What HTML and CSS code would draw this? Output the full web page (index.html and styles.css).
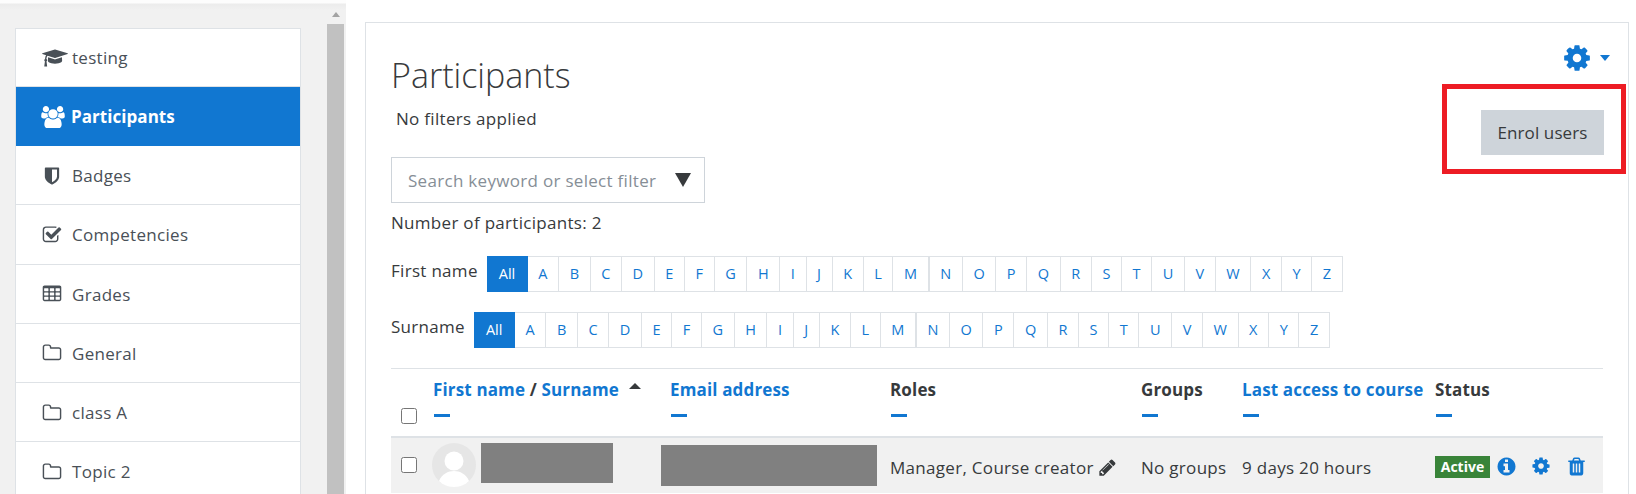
FILE: index.html
```html
<!DOCTYPE html>
<html lang="en">
<head>
<meta charset="utf-8">
<title>Participants</title>
<link rel="stylesheet" href="styles.css">
</head>
<body>
<svg class="defs" aria-hidden="true">
  <symbol id="i-cap" viewBox="0 0 2304 1792"><path d="M1774 836l18 316q4 69-82 128t-235 93.500-323 34.500-323-34.500-235-93.500-82-128l18-316 574 181q22 7 48 7t48-7zm530-324q0 23-22 31l-1120 352q-4 1-10 1t-10-1l-652-206q-43 34-71 111.500t-34 178.500q63 36 63 109 0 69-58 107l58 433q2 14-8 25-9 11-24 11h-192q-15 0-24-11-10-11-8-25l58-433q-58-38-58-107 0-73 65-111 11-207 98-330l-333-104q-22-8-22-31t22-31l1120-352q4-1 10-1t10 1l1120 352q22 8 22 31z"/></symbol>
  <symbol id="i-users" viewBox="0 0 1920 1792"><path d="M593 896q-162 5-265 128h-134q-82 0-138-40.500t-56-118.500q0-353 124-353 6 0 43.500 21t97.500 42.500 119 21.500q67 0 133-23-5 37-5 66 0 139 81 256zm1071 637q0 120-73 189.500t-194 69.500h-874q-121 0-194-69.500t-73-189.500q0-53 3.500-103.500t14-109 26.500-108.500 43-97.500 62-81 85.500-53.500 111.500-20q10 0 43 21.500t73 48 107 48 135 21.500 135-21.500 107-48 73-48 43-21.500q61 0 111.500 20t85.500 53.500 62 81 43 97.500 26.500 108.500 14 109 3.500 103.500zm-1024-1277q0 106-75 181t-181 75-181-75-75-181 75-181 181-75 181 75 75 181zm704 384q0 159-112.500 271.500t-271.500 112.500-271.500-112.500-112.500-271.500 112.500-271.500 271.500-112.500 271.500 112.500 112.500 271.500zm576 225q0 78-56 118.500t-138 40.500h-134q-103-123-265-128 81-117 81-256 0-29-5-66 66 23 133 23 59 0 119-21.500t97.500-42.500 43.500-21q124 0 124 353zm-128-609q0 106-75 181t-181 75-181-75-75-181 75-181 181-75 181 75 75 181z"/></symbol>
  <symbol id="i-shield" viewBox="0 0 1792 1792"><path d="M1344 960v-640h-448v1137q119-63 213-137 235-184 235-360zm192-768v768q0 86-33.500 170.500t-83 150-118 127.500-126.500 103-121 77.500-89.500 49.500-42.500 20q-12 6-26 6t-26-6q-16-7-42.500-20t-89.500-49.500-121-77.500-126.500-103-118-127.500-83-150-33.500-170.500v-768q0-26 19-45t45-19h1152q26 0 45 19t19 45z"/></symbol>
  <symbol id="i-check" viewBox="0 0 1792 1792"><path d="M1472 930v318q0 119-84.500 203.500t-203.500 84.500h-832q-119 0-203.500-84.500t-84.500-203.500v-832q0-119 84.500-203.500t203.500-84.500h832q63 0 117 25 15 7 18 23 3 17-9 29l-49 49q-10 10-23 10-3 0-9-2-23-6-45-6h-832q-66 0-113 47t-47 113v832q0 66 47 113t113 47h832q66 0 113-47t47-113v-254q0-13 9-22l64-64q10-10 23-10 6 0 12 3 20 8 20 29zm231-489l-814 814q-24 24-57 24t-57-24l-430-430q-24-24-24-57t24-57l110-110q24-24 57-24t57 24l263 263 647-647q24-24 57-24t57 24l110 110q24 24 24 57t-24 57z"/></symbol>
  <symbol id="i-table" viewBox="0 0 1792 1792"><path d="M576 1376v-192q0-14-9-23t-23-9h-320q-14 0-23 9t-9 23v192q0 14 9 23t23 9h320q14 0 23-9t9-23zm0-384v-192q0-14-9-23t-23-9h-320q-14 0-23 9t-9 23v192q0 14 9 23t23 9h320q14 0 23-9t9-23zm512 384v-192q0-14-9-23t-23-9h-320q-14 0-23 9t-9 23v192q0 14 9 23t23 9h320q14 0 23-9t9-23zm-512-768v-192q0-14-9-23t-23-9h-320q-14 0-23 9t-9 23v192q0 14 9 23t23 9h320q14 0 23-9t9-23zm512 384v-192q0-14-9-23t-23-9h-320q-14 0-23 9t-9 23v192q0 14 9 23t23 9h320q14 0 23-9t9-23zm512 384v-192q0-14-9-23t-23-9h-320q-14 0-23 9t-9 23v192q0 14 9 23t23 9h320q14 0 23-9t9-23zm-512-768v-192q0-14-9-23t-23-9h-320q-14 0-23 9t-9 23v192q0 14 9 23t23 9h320q14 0 23-9t9-23zm512 384v-192q0-14-9-23t-23-9h-320q-14 0-23 9t-9 23v192q0 14 9 23t23 9h320q14 0 23-9t9-23zm0-384v-192q0-14-9-23t-23-9h-320q-14 0-23 9t-9 23v192q0 14 9 23t23 9h320q14 0 23-9t9-23zm128-320v1088q0 66-47 113t-113 47h-1344q-66 0-113-47t-47-113v-1088q0-66 47-113t113-47h1344q66 0 113 47t47 113z"/></symbol>
  <symbol id="i-folder" viewBox="0 0 1792 1792"><path d="M1600 1312v-704q0-40-28-68t-68-28h-704q-40 0-68-28t-28-68v-64q0-40-28-68t-68-28h-320q-40 0-68 28t-28 68v960q0 40 28 68t68 28h1216q40 0 68-28t28-68zm128-704v704q0 92-66 158t-158 66h-1216q-92 0-158-66t-66-158v-960q0-92 66-158t158-66h320q92 0 158 66t66 158v32h672q92 0 158 66t66 158z"/></symbol>
  <symbol id="i-cog" viewBox="0 0 1792 1792"><path d="M1152 896q0-106-75-181t-181-75-181 75-75 181 75 181 181 75 181-75 75-181zm512-109v222q0 12-8 23t-20 13l-185 28q-19 54-39 91 35 50 107 138 10 12 10 25t-9 23q-27 37-99 108t-94 71q-12 0-26-9l-138-108q-44 23-91 38-16 136-29 186-7 27-35 27h-222q-14 0-24.500-8.500t-11.500-21.500l-28-184q-49-16-90-37l-141 107q-10 9-25 9-14 0-25-11-126-114-165-168-7-10-7-23 0-12 8-23 15-21 51-66.500t54-70.500q-27-50-41-99l-183-27q-13-2-21-12.500t-8-23.500v-222q0-12 8-23t19-13l186-28q14-46 39-92-40-57-107-138-10-12-10-24 0-10 9-23 26-36 98.500-107.500t94.500-71.500q13 0 26 10l138 107q44-23 91-38 16-136 29-186 7-27 35-27h222q14 0 24.500 8.500t11.500 21.500l28 184q49 16 90 37l142-107q9-9 24-9 13 0 25 10 129 119 165 170 7 8 7 22 0 12-8 23-15 21-51 66.500t-54 70.500q26 50 41 98l183 28q13 2 21 12.500t8 23.500z"/></symbol>
  <symbol id="i-pencil" viewBox="0 0 1792 1792"><path d="M491 1536l91-91-235-235-91 91v107h128v128h107zm523-928q0-22-22-22-10 0-17 7l-542 542q-7 7-7 17 0 22 22 22 10 0 17-7l542-542q7-7 7-17zm-54-192l416 416-832 832h-416v-416zm683 96q0 53-37 90l-166 166-416-416 166-165q36-38 90-38 53 0 91 38l235 234q37 39 37 91z"/></symbol>
  <symbol id="i-info" viewBox="0 0 1792 1792"><path d="M1152 1376v-160q0-14-9-23t-23-9h-96v-512q0-14-9-23t-23-9h-320q-14 0-23 9t-9 23v160q0 14 9 23t23 9h96v320h-96q-14 0-23 9t-9 23v160q0 14 9 23t23 9h448q14 0 23-9t9-23zm-128-896v-160q0-14-9-23t-23-9h-192q-14 0-23 9t-9 23v160q0 14 9 23t23 9h192q14 0 23-9t9-23zm640 416q0 209-103 385.500t-279.500 279.500-385.500 103-385.500-103-279.500-279.500-103-385.500 103-385.500 279.500-279.500 385.500-103 385.500 103 279.500 279.500 103 385.500z"/></symbol>
  <symbol id="i-trash" viewBox="0 0 1792 1792"><path d="M704 1376v-704q0-14-9-23t-23-9h-64q-14 0-23 9t-9 23v704q0 14 9 23t23 9h64q14 0 23-9t9-23zm256 0v-704q0-14-9-23t-23-9h-64q-14 0-23 9t-9 23v704q0 14 9 23t23 9h64q14 0 23-9t9-23zm256 0v-704q0-14-9-23t-23-9h-64q-14 0-23 9t-9 23v704q0 14 9 23t23 9h64q14 0 23-9t9-23zm-544-992h448l-48-117q-7-9-17-11h-317q-10 2-17 11zm928 32v64q0 14-9 23t-23 9h-96v948q0 83-47 143.500t-113 60.500h-832q-66 0-113-58.500t-47-141.500v-952h-96q-14 0-23-9t-9-23v-64q0-14 9-23t23-9h309l70-167q15-37 54-63t79-26h320q40 0 79 26t54 63l70 167h309q14 0 23 9t9 23z"/></symbol>
</svg>

<div class="page">
  <aside class="drawer">
    <nav class="nav">
      <a class="nav-item"><svg class="nav-icon nav-icon-cap"><use href="#i-cap"/></svg>testing</a>
      <a class="nav-item active"><svg class="nav-icon nav-icon-users"><use href="#i-users"/></svg>Participants</a>
      <a class="nav-item"><svg class="nav-icon"><use href="#i-shield"/></svg>Badges</a>
      <a class="nav-item"><svg class="nav-icon"><use href="#i-check"/></svg>Competencies</a>
      <a class="nav-item"><svg class="nav-icon"><use href="#i-table"/></svg>Grades</a>
      <a class="nav-item"><svg class="nav-icon"><use href="#i-folder"/></svg>General</a>
      <a class="nav-item"><svg class="nav-icon"><use href="#i-folder"/></svg>class A</a>
      <a class="nav-item"><svg class="nav-icon"><use href="#i-folder"/></svg>Topic 2</a>
    </nav>
    <div class="scrollbar">
      <span class="scroll-arrow"></span>
      <span class="scroll-thumb"></span>
    </div>
  </aside>

  <main class="main">
    <section class="card">
      <div class="head">
        <div class="head-left">
          <h1 class="title">Participants</h1>
          <p class="filters">No filters applied</p>
        </div>
        <div class="head-right">
          <div class="settings"><svg class="settings-cog"><use href="#i-cog"/></svg><span class="settings-caret"></span></div>
          <button class="enrol">Enrol users</button>
          <span class="highlight"></span>
        </div>
      </div>

      <div class="search">
        <span class="search-text">Search keyword or select filter</span>
        <span class="search-arrow"></span>
      </div>
      <p class="count">Number of participants: 2</p>

      <div class="initials">
        <span class="initials-label">First name</span>
        <ul class="pager"><li class="on">All</li><li>A</li><li>B</li><li>C</li><li>D</li><li>E</li><li>F</li><li>G</li><li>H</li><li>I</li><li>J</li><li>K</li><li>L</li><li class="split">M</li><li>N</li><li>O</li><li>P</li><li>Q</li><li>R</li><li>S</li><li>T</li><li>U</li><li>V</li><li>W</li><li>X</li><li>Y</li><li>Z</li></ul>
      </div>
      <div class="initials second">
        <span class="initials-label">Surname</span>
        <ul class="pager"><li class="on">All</li><li>A</li><li>B</li><li>C</li><li>D</li><li>E</li><li>F</li><li>G</li><li>H</li><li>I</li><li>J</li><li>K</li><li>L</li><li class="split">M</li><li>N</li><li>O</li><li>P</li><li>Q</li><li>R</li><li>S</li><li>T</li><li>U</li><li>V</li><li>W</li><li>X</li><li>Y</li><li>Z</li></ul>
      </div>

      <table class="grid">
        <colgroup>
          <col class="c-check"><col class="c-name"><col class="c-email"><col class="c-roles"><col class="c-groups"><col class="c-access"><col class="c-status">
        </colgroup>
        <thead>
          <tr>
            <th class="cell-check"><span class="box"></span></th>
            <th><div class="th-label"><a>First name</a> / <a>Surname</a><span class="sort"></span></div><span class="dash"></span></th>
            <th><div class="th-label"><a>Email address</a></div><span class="dash"></span></th>
            <th><div class="th-label">Roles</div><span class="dash"></span></th>
            <th><div class="th-label">Groups</div><span class="dash"></span></th>
            <th><div class="th-label"><a>Last access to course</a></div><span class="dash"></span></th>
            <th><div class="th-label">Status</div><span class="dash"></span></th>
          </tr>
        </thead>
        <tbody>
          <tr>
            <td class="cell-check"><span class="box"></span></td>
            <td>
              <div class="person">
                <svg class="avatar" viewBox="0 0 44 44"><circle cx="22" cy="22" r="22" fill="#e6e6e6"/><circle cx="22" cy="18" r="9.500" fill="#fff"/><path d="M7 38c3-7 9-10 15-10s12 3 15 10c-4 4-9 6-15 6S11 42 7 38z" fill="#fff"/></svg>
                <span class="redact-name"></span>
              </div>
            </td>
            <td><span class="redact-email"></span></td>
            <td class="txt">Manager, Course creator <svg class="pencil"><use href="#i-pencil"/></svg></td>
            <td class="txt">No groups</td>
            <td class="txt">9 days 20 hours</td>
            <td>
              <div class="status">
                <span class="badge">Active</span>
                <svg class="act act-info"><use href="#i-info"/></svg>
                <svg class="act act-cog"><use href="#i-cog"/></svg>
                <svg class="act act-trash"><use href="#i-trash"/></svg>
              </div>
            </td>
          </tr>
        </tbody>
      </table>
    </section>
  </main>
</div>
</body>
</html>
```

FILE: styles.css
```css
* { box-sizing: border-box; }
html, body { margin: 0; height: 494px; overflow: hidden; background: #fff; }
body { font-family: "Open Sans", "Liberation Sans", sans-serif; font-size: 17px; letter-spacing: 0.3px; color: #373a3c; }
.defs { display: none; }
p, h1, ul { margin: 0; padding: 0; }

.page { display: flex; height: 494px; }

/* left drawer */
.drawer {
  width: 346px; flex: none; display: flex; background: #f1f1f1;
  padding: 28px 0 0 15px; position: relative;
  background-image: linear-gradient(#fdfdfd 0, #fdfdfd 3px, #ececec 4px, #f1f1f1 10px);
}
.nav { width: 286px; height: 466px; flex: none; background: #fff; border: 1px solid #dee2e6; border-bottom: 0; overflow: hidden; }
.nav-item { display: flex; align-items: center; height: 59.200px; padding: 1px 0 0 26px; border-bottom: 1px solid #dee2e6; color: #495057; }
.nav-item:first-child { height: 58px; padding-top: 0; }
.nav-item.active { background: #1177d1; color: #fff; font-weight: 700; letter-spacing: 0.05px; margin-left: -1px; margin-right: -1px; padding-left: 27px; border-bottom-color: #1177d1; }
.nav-icon { width: 20px; height: 20px; margin-right: 10px; flex: none; fill: currentColor; }
.nav-icon-cap { width: 26px; margin-right: 4px; }
.nav-icon-users { width: 24px; height: 22px; margin-right: 6px; margin-left: -1px; }
.scrollbar { width: 17px; margin-left: 26px; display: flex; flex-direction: column; align-items: center; margin-top: -28px; }
.scroll-arrow { margin-top: 12px; width: 0; height: 0; border: 4.500px solid transparent; border-top: 0; border-bottom: 5px solid #a3a3a3; }
.scroll-thumb { width: 17px; flex: 1; margin-top: 7px; background: #c1c1c1; }

/* main */
.main { flex: 1; padding: 22px 7px 0 19px; }
.card { border: 1px solid #dee2e6; border-bottom: 0; padding: 0 25px; height: 472px; overflow: hidden; }
.head { display: flex; justify-content: space-between; }
.head-left { padding-top: 31px; }
.title { font-weight: 300; font-size: 34px; letter-spacing: 0; line-height: 42px; color: #373a3c; }
.filters { margin: 11px 0 0 5px; line-height: 24px; }
.head-right { position: relative; display: flex; flex-direction: column; align-items: flex-end; width: 200px; }
.settings { display: flex; align-items: center; margin: 21px -7px 0 0; height: 27px; }
.settings-cog { width: 30px; height: 30px; fill: #1177d1; flex: none; }
.settings-caret { margin-left: 8px; width: 0; height: 0; border: 5.500px solid transparent; border-bottom: 0; border-top: 6px solid #1177d1; }
.enrol { margin: 39px -1px 0 0; width: 123px; height: 45px; border: 0; background: #ced4da; color: #373a3c; font: inherit; letter-spacing: 0.1px; padding: 0; }
.highlight { position: absolute; left: 39px; top: 61px; width: 184px; height: 90px; border: 5px solid #ed1c24; }

.search { display: flex; align-items: center; justify-content: space-between; width: 314px; height: 46px; margin-top: 2px; padding: 0 16px; border: 1px solid #ced4da; color: #868e96; }
.search-arrow { width: 0; height: 0; border: 8px solid transparent; border-bottom: 0; border-top: 14px solid #373a3c; margin-right: -3px; }
.count { margin-top: 8px; line-height: 24px; }

.initials { display: flex; align-items: flex-start; margin-top: 21px; height: 36px; }
.initials.second { margin-top: 20px; }
.initials-label { line-height: 30px; margin-right: 9.500px; }
.pager { display: flex; list-style: none; font-size: 14.500px; letter-spacing: 0; color: #1177d1; line-height: 34px; }
.pager li { padding: 0 10.600px; border: 1px solid #dee2e6; border-left: 0; }
.pager .on { background: #1177d1; border-color: #1177d1; color: #fff; padding: 0 11.500px; }
.pager .split { border-right-width: 2px; }

/* table */
.grid { width: 1212px; table-layout: fixed; border-collapse: collapse; margin-top: 20px; }
.c-check { width: 34px; } .c-name { width: 237px; } .c-email { width: 220px; } .c-roles { width: 251px; }
.c-groups { width: 101px; } .c-access { width: 193px; } .c-status { width: 176px; }
th { text-align: left; vertical-align: top; height: 68px; padding: 9px 8px 0; border-top: 1px solid #dee2e6; border-bottom: 2px solid #dee2e6; font-weight: 700; letter-spacing: 0.15px; white-space: nowrap; }
th.cell-check { vertical-align: bottom; padding: 0 0 12px 10px; }
th a { color: #1177d1; }
.th-label { line-height: 24px; height: 25px; position: relative; }
.dash { display: block; width: 16px; height: 3px; margin: 11px 0 0 1px; background: #1177d1; }
.sort { display: inline-block; margin-left: 10px; width: 0; height: 0; vertical-align: 7px; border: 6px solid transparent; border-top: 0; border-bottom: 6px solid #373a3c; }
.box { display: block; width: 16px; height: 16px; border: 1px solid #767676; border-radius: 2.500px; background: #fff; }
tbody tr { background: #f1f1f1; }
td { padding: 0 8px; height: 56px; vertical-align: middle; }
td.cell-check { padding-left: 10px; }
td.txt { white-space: nowrap; padding-top: 5px; }
.person { display: flex; align-items: flex-start; margin-left: -1px; }
.avatar { width: 44px; height: 44px; flex: none; }
.redact-name { width: 132px; height: 40px; margin-left: 5px; background: #808080; }
.redact-email { display: block; width: 216px; height: 41px; margin-left: -9px; background: #808080; }
.pencil { width: 19px; height: 19px; fill: #373a3c; vertical-align: -3px; }
.status { display: flex; align-items: center; }
.badge { width: 55px; height: 22px; background: #398439; color: #fff; font-weight: 700; font-size: 14px; letter-spacing: 0; line-height: 22px; text-align: center; margin-top: 4px; }
.act { width: 21px; height: 21px; fill: #1177d1; flex: none; margin-top: 2px; }
.act-info { margin-left: 5.500px; }
.act-cog { margin-left: 14px; width: 20px; height: 20px; }
.act-trash { margin-left: 15px; }
```
